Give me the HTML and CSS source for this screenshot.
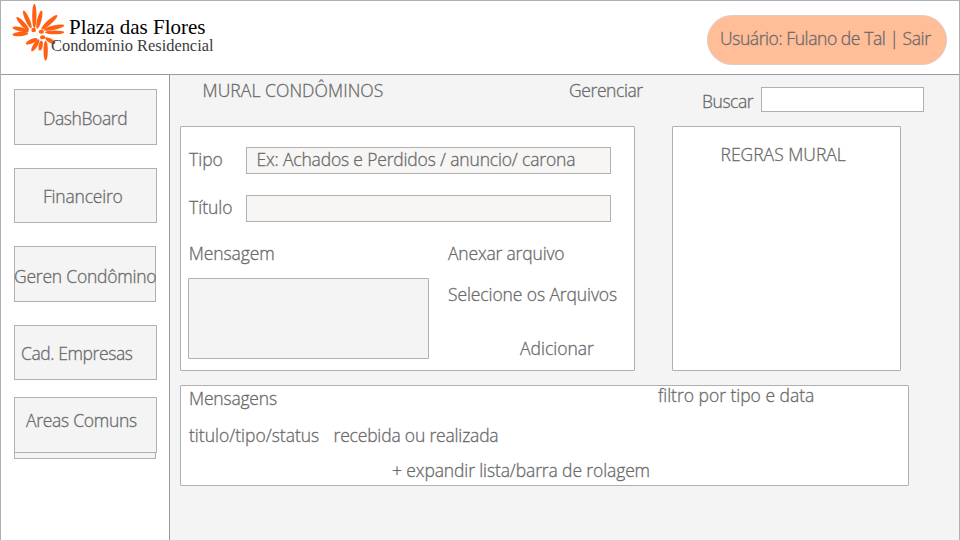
FILE: index.html
```
<!DOCTYPE html>
<html lang="pt-BR">
<head>
<meta charset="utf-8">
<title>Plaza das Flores</title>
<link rel="stylesheet" href="styles.css">
</head>
<body>
<header class="header">
  <div class="brand">
    <svg class="flower" width="54" height="60" viewBox="33 6 162 180">
      <g fill="#ff6114">
        <ellipse cx="103" cy="48" rx="6.5" ry="37"/>
        <ellipse cx="82" cy="58" rx="6.5" ry="29" transform="rotate(-24 82 58)"/>
        <ellipse cx="118" cy="59" rx="6.5" ry="28" transform="rotate(14 118 59)"/>
        <ellipse cx="68" cy="71" rx="6.5" ry="27" transform="rotate(-43 68 71)"/>
        <ellipse cx="148" cy="67" rx="7" ry="32" transform="rotate(48 148 67)"/>
        <ellipse cx="162" cy="83" rx="6.5" ry="32" transform="rotate(77 162 83)"/>
        <ellipse cx="164" cy="97" rx="5.5" ry="29" transform="rotate(90 164 97)"/>
        <ellipse cx="62" cy="88" rx="6.5" ry="25" transform="rotate(-77 62 88)"/>
        <ellipse cx="61" cy="102" rx="6.5" ry="24" transform="rotate(84 61 102)"/>
        <ellipse cx="95" cy="124" rx="6.5" ry="19" transform="rotate(66 95 124)"/>
        <ellipse cx="106" cy="136" rx="6.5" ry="21" transform="rotate(32 106 136)"/>
        <ellipse cx="122" cy="137" rx="6" ry="15" transform="rotate(10 122 137)"/>
        <ellipse cx="137" cy="152" rx="6.5" ry="30"/>
        <ellipse cx="151" cy="122" rx="6.5" ry="17" transform="rotate(-61 151 122)"/>
        <circle cx="101" cy="90" r="7"/>
        <ellipse cx="124" cy="95" rx="8" ry="6"/>
        <ellipse cx="128" cy="112" rx="8" ry="6"/>
      </g>
    </svg>
    <div class="brand-text">
      <div class="brand-name">Plaza das Flores</div>
      <div class="brand-sub">Condomínio Residencial</div>
    </div>
  </div>
  <div class="user">Usuário: Fulano de Tal | Sair</div>
</header>
<div class="body">
  <nav class="sidebar">
    <a class="item dash">DashBoard</a>
    <a class="item fin">Financeiro</a>
    <a class="item geren">Geren Condômino</a>
    <a class="item cad">Cad. Empresas</a>
    <div class="stack">
      <a class="item areas">Areas Comuns</a>
    </div>
  </nav>
  <main class="main">
    <div class="toolbar">
      <h1 class="title">MURAL CONDÔMINOS</h1>
      <a class="manage">Gerenciar</a>
      <label class="search-label">Buscar</label>
      <div class="search"></div>
    </div>
    <div class="panels">
      <section class="panel form">
        <div class="field"><span class="label">Tipo</span><div class="input example">Ex: Achados e Perdidos / anuncio/ carona</div></div>
        <div class="field"><span class="label">Título</span><div class="input"></div></div>
        <div class="columns">
          <div class="message">
            <div class="message-title">Mensagem</div>
            <div class="textarea"></div>
          </div>
          <div class="attach">
            <div class="attach-title">Anexar arquivo</div>
            <div class="choose">Selecione os Arquivos</div>
            <div class="add">Adicionar</div>
          </div>
        </div>
      </section>
      <section class="panel rules">REGRAS MURAL</section>
    </div>
    <section class="panel messages">
      <div class="msg-head"><span>Mensagens</span><span class="filter">filtro por tipo e data</span></div>
      <div class="msg-row"><span class="status">titulo/tipo/status</span><span class="received">recebida ou realizada</span></div>
      <div class="expand">+ expandir lista/barra de rolagem</div>
    </section>
  </main>
</div>
</body>
</html>
```
FILE: styles.css
```
* { box-sizing: border-box; }
body {
  margin: 0;
  width: 960px;
  height: 540px;
  overflow: hidden;
  display: flex;
  flex-direction: column;
  border: 1px solid #b0b0b0;
  border-bottom: 0;
  background: #fff;
  color: #6a6a6a;
  font: 300 17.5px/24px "Open Sans", "Noto Sans", sans-serif;
  -webkit-text-stroke: 0.3px #6a6a6a;
  white-space: nowrap;
}
.header {
  flex: none;
  height: 74px;
  display: flex;
  justify-content: space-between;
  border-bottom: 1px solid #999;
  padding: 1px 12px 0 10px;
}
.brand { display: flex; }
.flower { flex: none; }
.brand-text {
  margin: 14px 0 0 -14px;
  font-family: "Liberation Serif", serif;
  font-weight: 400;
  -webkit-text-stroke: 0;
}
.brand-name { margin-left: 18px; font-size: 21px; line-height: 22px; color: #000; }
.brand-sub { font-size: 16.4px; line-height: 16px; color: #3c3c3c; }
.user {
  width: 240px;
  height: 50px;
  margin-top: 13px;
  padding: 10px 0 0 12px;
  border: 1px solid #e0cdc2;
  border-radius: 25px;
  background: #ffbd98;
  letter-spacing: -0.42px;
}
.body { flex: 1; display: flex; min-height: 0; }
.sidebar {
  flex: none;
  width: 169px;
  border-right: 1px solid #999;
  padding: 14px 0 0 13px;
}
.item {
  display: block;
  width: 143px;
  height: 55px;
  border: 1px solid #b0b0b0;
  background: #f4f4f4;
}
.dash { height: 56px; margin-bottom: 23px; padding: 16px 0 0 28px; letter-spacing: -0.4px; }
.fin { margin-bottom: 23px; padding: 15px 0 0 28px; letter-spacing: -0.2px; }
.geren { width: 142px; height: 56px; margin-bottom: 23px; padding-top: 17px; text-indent: -1px; letter-spacing: -0.22px; }
.cad { margin-bottom: 17px; padding: 15px 0 0 6px; letter-spacing: -0.4px; }
.stack { width: 142px; height: 62px; border: 1px solid #b0b0b0; border-top: 0; background: #f4f4f4; }
.areas { height: 56px; margin-left: -1px; padding: 10px 0 0 11px; letter-spacing: -0.28px; }
.main { flex: 1; padding-left: 10px; background: #f4f4f4; }
.toolbar { display: flex; height: 51px; }
.title { margin: 3px 0 0 22.5px; width: 366.5px; font: inherit; letter-spacing: 0.07px; }
.manage { margin-top: 3px; width: 133px; letter-spacing: -0.4px; }
.search-label { margin-top: 14px; width: 58.5px; letter-spacing: -0.45px; }
.search { width: 163px; height: 25px; margin-top: 12px; border: 1px solid #b0b0b0; background: #fff; }
.panels { display: flex; gap: 37px; }
.panel { border: 1px solid #b0b0b0; border-radius: 1px; background: #fff; }
.form { width: 455px; height: 245px; padding: 20px 0 0 7px; }
.field { display: flex; height: 27px; margin-bottom: 21px; }
.label { width: 58px; padding-left: 1px; }
.input {
  width: 365px;
  height: 27px;
  border: 1px solid #b0b0b0;
  background: #f7f6f5;
  padding-left: 9.5px;
  line-height: 22px;
  letter-spacing: -0.17px;
}
.columns { display: flex; margin-top: -2px; }
.message { width: 260px; }
.message-title { padding-left: 0.7px; letter-spacing: -0.1px; }
.textarea { width: 241px; height: 81px; margin-top: 13px; border: 1px solid #b0b0b0; border-radius: 1px; background: #f4f4f4; }
.attach-title { letter-spacing: -0.18px; }
.choose { margin-top: 17px; letter-spacing: -0.1px; }
.add { margin: 30px 0 0 72px; }
.rules { width: 229px; height: 245px; padding: 15px 0 0 47.5px; }
.messages { width: 729px; height: 101px; margin-top: 14px; padding-left: 8px; }
.msg-head { display: flex; letter-spacing: -0.02px; }
.msg-head span:first-child { width: 469px; letter-spacing: -0.2px; }
.filter { margin-top: -3px; height: 24px; }
.msg-row { display: flex; margin-top: 13px; }
.status { width: 144.5px; }
.received { letter-spacing: -0.18px; }
.expand { margin: 11px 0 0 203px; letter-spacing: -0.12px; }
```
